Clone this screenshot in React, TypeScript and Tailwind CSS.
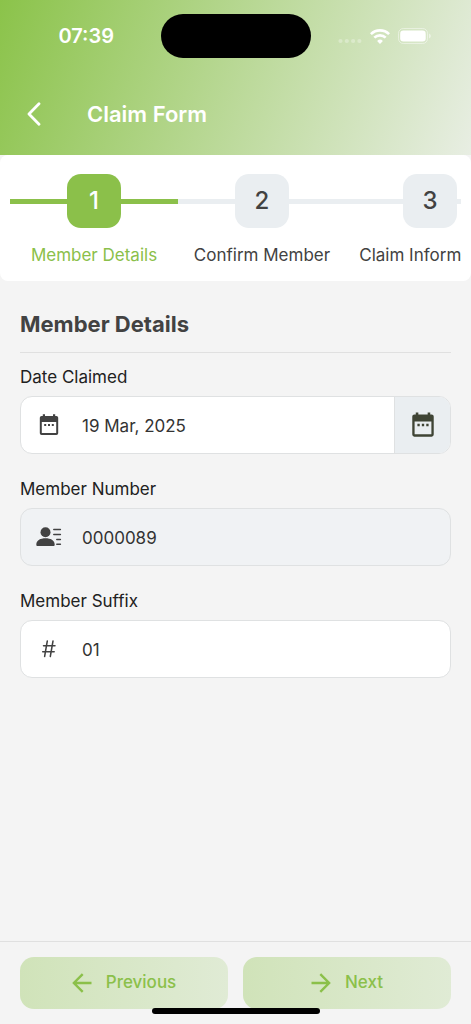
import React, { useState } from 'react'
import clsx from 'clsx'

const steps = ['Member Details', 'Confirm Member', 'Claim Information']

function CalendarIcon({ className }: { className?: string }) {
  return (
    <svg viewBox="0 0 24 24" fill="currentColor" className={className}>
      <path
        fillRule="evenodd"
        d="M5.800 1.200h2.200V3h8V1.200h2.200V3h1.200A1.800 1.800 0 0 1 21.200 4.800V20.200A1.800 1.800 0 0 1 19.400 22H4.600A1.800 1.800 0 0 1 2.800 20.200V4.800A1.800 1.800 0 0 1 4.600 3h1.200zM4.800 9v11h14.400V9z"
      />
      <path d="M7.200 11h2v2h-2zM11 11h2v2h-2zM14.800 11h2v2h-2z" />
    </svg>
  )
}

function MemberIcon({ className }: { className?: string }) {
  return (
    <svg viewBox="0 0 26 20" fill="currentColor" className={className}>
      <circle cx="9.500" cy="5.200" r="5" />
      <path d="M.3 17.500C.3 13.300 4.500 11.300 9.500 11.300s9.200 2 9.200 6.200c0 1-.4 1.500-1.400 1.500H1.700c-1 0-1.400-.5-1.400-1.500z" />
      <path
        d="M17.800 2.500h6.600M17.800 7.500h6.600M20.800 12.500h3.600M20.800 17.300h3.600"
        fill="none"
        stroke="currentColor"
        strokeWidth="1.500"
        strokeLinecap="round"
      />
    </svg>
  )
}

function HashIcon({ className }: { className?: string }) {
  return (
    <svg
      viewBox="0 0 16 18"
      fill="none"
      stroke="currentColor"
      strokeWidth="1.500"
      strokeLinecap="round"
      className={className}
    >
      <path d="M6.300 1 3.600 16.500M12 1 9.300 16.500M2.500 5.800h11.500M1.700 11.700h11.500" />
    </svg>
  )
}

function WifiIcon({ className }: { className?: string }) {
  return (
    <svg viewBox="0 0 20 15" fill="none" stroke="currentColor" strokeWidth="2.600" className={className}>
      <path d="M.9 5.100a13 13 0 0 1 18.200 0" />
      <path d="M4.300 8.700a8.100 8.100 0 0 1 11.400 0" />
      <path d="M10 14.900 7.100 12a4.200 4.200 0 0 1 5.800 0z" fill="currentColor" stroke="none" />
    </svg>
  )
}

function BatteryIcon({ className }: { className?: string }) {
  return (
    <svg viewBox="0 0 33 16" className={className}>
      <rect x=".5" y=".5" width="29" height="15" rx="4.800" fill="none" stroke="white" strokeOpacity=".45" />
      <rect x="2.200" y="2.500" width="25.500" height="11" rx="3.200" fill="white" />
      <path d="M31 5.600c1.200.5 1.800 1.300 1.800 2.400s-.6 1.900-1.800 2.400z" fill="white" fillOpacity=".5" />
    </svg>
  )
}

function ArrowIcon({ className }: { className?: string }) {
  return (
    <svg viewBox="0 0 20 20" fill="none" stroke="currentColor" strokeWidth="2.400" className={className}>
      <path d="M19.500 10H2.500M10.700 1.200 1.900 10l8.800 8.800" />
    </svg>
  )
}

function StatusBar() {
  return (
    <div className="grid grid-cols-[1fr_150px_1fr] items-center pt-3.5 text-white">
      <span className="pl-3 text-center text-xl font-semibold">07:39</span>
      <div className="h-11 rounded-full bg-black" />
      <div className="flex items-center justify-center gap-2 pr-3">
        <svg viewBox="0 0 24 16" fill="currentColor" className="h-4 w-6 opacity-30">
          <circle cx="2.500" cy="13" r="2.100" />
          <circle cx="8.800" cy="13" r="2.100" />
          <circle cx="15.100" cy="13" r="2.100" />
          <circle cx="21.400" cy="13" r="2.100" />
        </svg>
        <WifiIcon className="h-[15px] w-5" />
        <BatteryIcon className="h-4 w-[33px]" />
      </div>
    </div>
  )
}

function Header() {
  return (
    <header className="bg-[linear-gradient(110deg,#8bc34a_0%,#e8eee3_100%)] pb-[17px]">
      <StatusBar />
      <div className="flex items-center gap-[35px] px-4 pt-8">
        <button type="button" aria-label="Back" className="flex size-9 items-center justify-center text-white">
          <svg
            viewBox="0 0 14 24"
            fill="none"
            stroke="currentColor"
            strokeWidth="2.800"
            strokeLinecap="round"
            strokeLinejoin="round"
            className="h-6 w-3.5"
          >
            <path d="M12 1.800 2 12l10 10.200" />
          </svg>
        </button>
        <h1 className="text-[22px] leading-12 font-semibold text-white">Claim Form</h1>
      </div>
    </header>
  )
}

function Stepper({ current }: { current: number }) {
  return (
    <nav className="rounded-lg bg-white px-2.5 pt-[19px] pb-3.5">
      <ol className="flex overflow-hidden">
        {steps.map((step, i) => {
          const active = i === current
          return (
            <li key={step} className="flex w-[168px] shrink-0 flex-col items-center">
              <div className="flex w-full items-center">
                <span className={clsx('h-[5px] flex-1', active ? 'bg-[#8bc04a]' : 'bg-[#eaeef1]')} />
                <span
                  className={clsx(
                    'flex size-[54px] items-center justify-center rounded-[14px] text-2xl font-medium',
                    active ? 'bg-[#8bc04a] text-white' : 'bg-[#eaeef1] text-[#424242]'
                  )}
                >
                  {i + 1}
                </span>
                <span className={clsx('h-[5px] flex-1', active ? 'bg-[#8bc04a]' : 'bg-[#eaeef1]')} />
              </div>
              <span
                className={clsx(
                  'pt-[15px] text-[17px] leading-6 whitespace-nowrap',
                  active ? 'text-[#8bc04a]' : 'text-[#424242]'
                )}
              >
                {step}
              </span>
            </li>
          )
        })}
      </ol>
    </nav>
  )
}

interface FieldProps {
  id: string
  label: string
  value: string
  onChange?: (value: string) => void
  icon: React.ReactNode
  action?: React.ReactNode
  readOnly?: boolean
}

function Field({ id, label, value, onChange, icon, action, readOnly }: FieldProps) {
  return (
    <div>
      <label htmlFor={id} className="block text-[17px] leading-6 text-[#212121]">
        {label}
      </label>
      <div
        className={clsx(
          'mt-[7px] flex h-[58px] overflow-hidden rounded-xl border border-[#dfe1e2]',
          readOnly ? 'bg-[#f0f2f4]' : 'bg-white'
        )}
      >
        <span className="flex w-14 shrink-0 items-center justify-center text-[#424242]">{icon}</span>
        <input
          id={id}
          type="text"
          value={value}
          readOnly={readOnly || !onChange}
          onChange={(e) => onChange?.(e.target.value)}
          className="min-w-0 flex-1 bg-transparent pt-1 pl-[5px] text-[17px] text-[#333333] outline-none"
        />
        {action}
      </div>
    </div>
  )
}

export default function App() {
  const [suffix, setSuffix] = useState('01')

  return (
    <div className="flex min-h-screen flex-col bg-[#f4f4f4] font-['Inter',sans-serif]">
      <Header />
      <Stepper current={0} />

      <main className="flex-1 px-5 pt-7">
        <h2 className="border-b border-[#e0e0e0] pb-[13px] text-[22px] leading-[30px] font-bold text-[#424242]">
          Member Details
        </h2>
        <form className="flex flex-col gap-[23px] pt-3">
          <Field
            id="date-claimed"
            label="Date Claimed"
            value="19 Mar, 2025"
            icon={<CalendarIcon className="size-6" />}
            action={
              <button
                type="button"
                aria-label="Pick a date"
                className="flex w-14 items-center justify-center border-l border-[#dfe1e2] bg-[#eaeef1] text-[#3f4435]"
              >
                <CalendarIcon className="size-7" />
              </button>
            }
          />
          <Field
            id="member-number"
            label="Member Number"
            value="0000089"
            icon={<MemberIcon className="h-5 w-[26px]" />}
            readOnly
          />
          <Field
            id="member-suffix"
            label="Member Suffix"
            value={suffix}
            onChange={setSuffix}
            icon={<HashIcon className="h-[18px] w-4" />}
          />
        </form>
      </main>

      <footer className="relative border-t border-[#e0e0e0] px-5 pt-[15px] pb-[15px]">
        <div className="flex gap-[15px] text-[17px] font-medium text-[#8bc04a]">
          <button
            type="button"
            className="flex h-[52px] flex-1 items-center justify-center gap-3.5 rounded-[14px] bg-linear-to-r from-[#d0e3b9] to-[#e0ebd5]"
          >
            <ArrowIcon className="size-5" />
            Previous
          </button>
          <button
            type="button"
            className="flex h-[52px] flex-1 items-center justify-center gap-3.5 rounded-[14px] bg-linear-to-r from-[#d0e3b9] to-[#e0ebd5]"
          >
            <ArrowIcon className="size-5 rotate-180" />
            Next
          </button>
        </div>
        {/* Home indicator */}
        <div className="absolute bottom-2.5 left-1/2 h-1.5 w-[168px] -translate-x-1/2 rounded-full bg-black" />
      </footer>
    </div>
  )
}
